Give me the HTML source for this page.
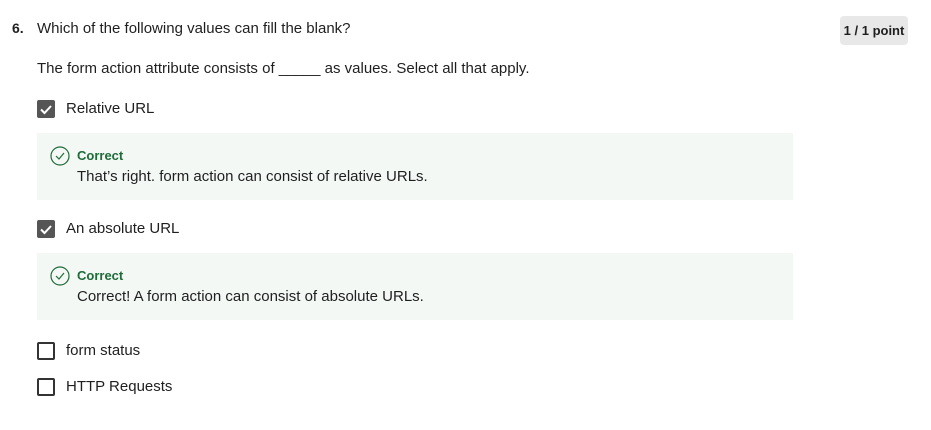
<!DOCTYPE html>
<html><head><style>
body{margin:0;width:931px;height:430px;background:#fff;font-family:"Liberation Sans",sans-serif;color:#1f1f1f;position:relative;font-size:15px;overflow:hidden}
.a{position:absolute;white-space:nowrap}
.cb{position:absolute;left:37px;width:18px;height:18px;box-sizing:border-box;border-radius:2px}
.on{background:#555}
.off{border:2px solid #333}
.fb{position:absolute;left:37px;width:756px;height:67px;background:#f3f8f5}
.ic{position:absolute;left:13px;top:13px}
.cor{position:absolute;left:40px;top:15px;color:#1f6b3a;font-weight:bold;font-size:13px}
.msg{position:absolute;left:40px;top:35px;font-size:15px}
</style></head><body>
<div class="a" style="left:12px;top:20px;font-weight:bold;font-size:14px">6.</div>
<div class="a" style="left:37px;top:20px">Which of the following values can fill the blank?</div>
<div class="a" style="left:840px;top:16px;width:68px;height:29px;background:#e8e8e8;border-radius:4px;font-weight:bold;font-size:13px;text-align:center;line-height:29px">1 / 1 point</div>
<div class="a" style="left:37px;top:60px">The form action attribute consists of _____ as values. Select all that apply.</div>

<div class="cb on" style="top:100px"><svg width="18" height="18"><path d="M4 9.5l3.5 3.5 6.5-7" stroke="#fff" stroke-width="2" fill="none"/></svg></div>
<div class="a" style="left:66px;top:100px">Relative URL</div>
<div class="fb" style="top:133px">
<svg class="ic" width="20" height="20"><circle cx="10" cy="10" r="9" fill="none" stroke="#1f6b3a" stroke-width="1.2"/><path d="M6 10l3 3 5-6" fill="none" stroke="#1f6b3a" stroke-width="1.2"/></svg>
<div class="cor">Correct</div><div class="msg">That’s right. form action can consist of relative URLs.</div></div>

<div class="cb on" style="top:220px"><svg width="18" height="18"><path d="M4 9.5l3.5 3.5 6.5-7" stroke="#fff" stroke-width="2" fill="none"/></svg></div>
<div class="a" style="left:66px;top:220px">An absolute URL</div>
<div class="fb" style="top:253px">
<svg class="ic" width="20" height="20"><circle cx="10" cy="10" r="9" fill="none" stroke="#1f6b3a" stroke-width="1.2"/><path d="M6 10l3 3 5-6" fill="none" stroke="#1f6b3a" stroke-width="1.2"/></svg>
<div class="cor">Correct</div><div class="msg">Correct! A form action can consist of absolute URLs.</div></div>

<div class="cb off" style="top:342px"></div>
<div class="a" style="left:66px;top:342px">form status</div>
<div class="cb off" style="top:378px"></div>
<div class="a" style="left:66px;top:378px">HTTP Requests</div>
</body></html>
